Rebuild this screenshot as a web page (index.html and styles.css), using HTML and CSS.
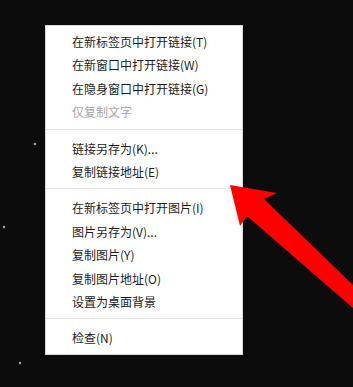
FILE: index.html
```html
<!DOCTYPE html>
<html lang="zh-CN">
<head>
<meta charset="utf-8">
<title>右键菜单</title>
<link rel="stylesheet" href="styles.css">
</head>
<body>
<div class="scene">
  <span class="star star-a"></span>
  <span class="star star-b"></span>
  <span class="star star-c"></span>

  <ul class="menu">
    <li class="item">在新标签页中打开链接(T)</li>
    <li class="item">在新窗口中打开链接(W)</li>
    <li class="item">在隐身窗口中打开链接(G)</li>
    <li class="item disabled">仅复制文字</li>
    <li class="sep"></li>
    <li class="item">链接另存为(K)...</li>
    <li class="item">复制链接地址(E)</li>
    <li class="sep"></li>
    <li class="item">在新标签页中打开图片(I)</li>
    <li class="item">图片另存为(V)...</li>
    <li class="item">复制图片(Y)</li>
    <li class="item">复制图片地址(O)</li>
    <li class="item">设置为桌面背景</li>
    <li class="sep"></li>
    <li class="item">检查(N)</li>
  </ul>

  <svg class="arrow" width="353" height="387" viewBox="0 0 353 387" aria-hidden="true">
    <polygon points="230,185 277,193 264,199 353,285 353,308 247,216 240,226" fill="#fe0000"/>
  </svg>
</div>
</body>
</html>
```
FILE: styles.css
```css
html, body {
  margin: 0;
  padding: 0;
  background: #0c0c0c;
}

.scene {
  position: relative;
  width: 353px;
  height: 387px;
  overflow: hidden;
  background: #0c0c0c;
}

.star {
  position: absolute;
  width: 2px;
  height: 2px;
  border-radius: 50%;
  background: #bdbdbd;
  box-shadow: 0 0 2px #8a8a8a;
}
.star-a { left: 34px; top: 143px; }
.star-b { left: 3px; top: 226px; }
.star-c { left: 19px; top: 362px; }

.menu {
  position: absolute;
  left: 45px;
  top: 25px;
  width: 196px;
  height: 324px;
  margin: 0;
  padding: 4px 0 0 0;
  box-sizing: content-box;
  list-style: none;
  background: #ffffff;
  border: 1px solid #d9d9d9;
  font-family: "Noto Sans CJK SC", "Noto Sans", sans-serif;
  font-size: 12px;
  color: #1b1b1b;
}

.item {
  height: 23.4px;
  line-height: 23.4px;
  padding-left: 26px;
  white-space: nowrap;
}

.item.disabled {
  color: #a5a5a5;
}

.sep {
  height: 1px;
  margin: 5px 0 7px 0;
  background: #e6e6e6;
}

.arrow {
  position: absolute;
  left: 0;
  top: 0;
}
```
